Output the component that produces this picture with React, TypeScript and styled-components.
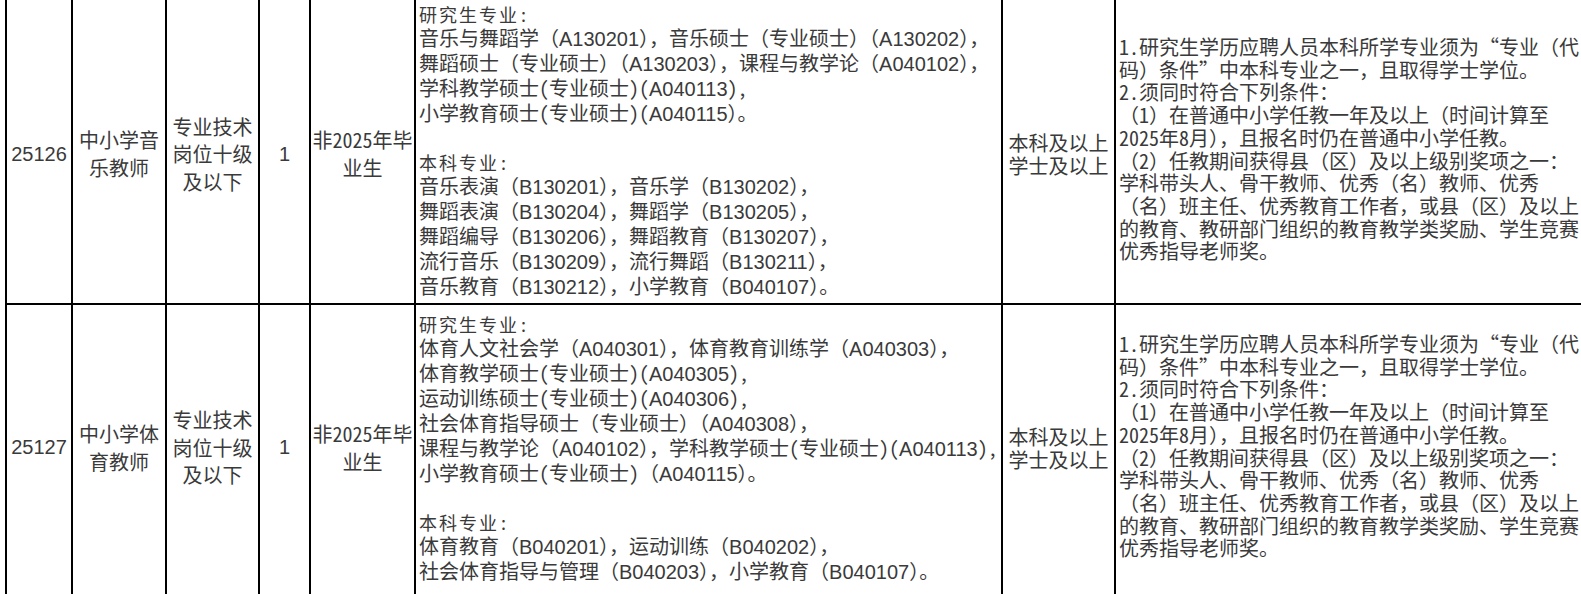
import styled, { createGlobalStyle } from 'styled-components';

const GlobalStyle = createGlobalStyle`
  html, body {
    margin: 0;
    padding: 0;
    background: #fff;
    overflow: hidden;
  }
`;

const cjk = '"Noto Sans Mono CJK SC", "Noto Sans CJK SC", sans-serif';
const latin = '"Liberation Sans", "Noto Sans CJK SC", sans-serif';

const Sheet = styled.div`
  width: 1581px;
  height: 594px;
  overflow: hidden;
  padding-left: 5px;
  box-sizing: border-box;
  font-family: ${cjk};
  font-size: 20px;
  color: #3a3a3a;
`;

const Row = styled.div<{ $height: number; $open?: boolean }>`
  display: grid;
  grid-template-columns: 66px 94px 93px 51px 105px 587px 113px 520px;
  width: max-content;
  height: ${({ $height }) => $height}px;
  box-sizing: border-box;
  border-bottom: ${({ $open }) => ($open ? 'none' : '2px solid #000')};
`;

const Cell = styled.div<{
  $left?: boolean;
  $latin?: boolean;
  $lh?: number;
  $pt?: number;
  $pb?: number;
  $pl?: number;
}>`
  box-sizing: border-box;
  border-left: 2px solid #000;
  display: flex;
  flex-direction: column;
  justify-content: center;
  align-items: ${({ $left }) => ($left ? 'flex-start' : 'center')};
  text-align: ${({ $left }) => ($left ? 'left' : 'center')};
  font-family: ${({ $latin }) => ($latin ? latin : cjk)};
  line-height: ${({ $lh }) => $lh ?? 27}px;
  padding: ${({ $pt }) => $pt ?? 0}px 0 ${({ $pb }) => $pb ?? 0}px ${({ $pl }) => $pl ?? 0}px;
  white-space: nowrap;
  overflow: hidden;
`;

const Line = styled.div`
  display: block;
`;

const Code = styled.span`
  font-family: ${latin};
`;

const Heading = styled.div`
  font-size: 18px;
  letter-spacing: 2px;
`;

const Blank = styled.div`
  height: 24px;
`;

// major codes like A130201 sit in a Latin face, the rest stays CJK
const MajorLine = ({ text }: { text: string }) => (
  <Line>
    {text.split(/([AB]\d{6})/).map((part, i) =>
      i % 2 ? <Code key={i}>{part}</Code> : part
    )}
  </Line>
);

interface Post {
  code: string;
  title: string[];
  level: string[];
  count: string;
  who: string[];
  grad: string[];
  undergrad: string[];
  degree: string[];
  terms: string[];
}

const terms = [
  '1.研究生学历应聘人员本科所学专业须为“专业（代',
  '码）条件”中本科专业之一，且取得学士学位。',
  '2.须同时符合下列条件：',
  '（1）在普通中小学任教一年及以上（时间计算至',
  '2025年8月），且报名时仍在普通中小学任教。',
  '（2）任教期间获得县（区）及以上级别奖项之一：',
  '学科带头人、骨干教师、优秀（名）教师、优秀',
  '（名）班主任、优秀教育工作者，或县（区）及以上',
  '的教育、教研部门组织的教育教学类奖励、学生竞赛',
  '优秀指导老师奖。',
];

const posts: Post[] = [
  {
    code: '25126',
    title: ['中小学音', '乐教师'],
    level: ['专业技术', '岗位十级', '及以下'],
    count: '1',
    who: ['非2025年毕', '业生'],
    grad: [
      '音乐与舞蹈学（A130201），音乐硕士（专业硕士）（A130202），',
      '舞蹈硕士（专业硕士）（A130203），课程与教学论（A040102），',
      '学科教学硕士(专业硕士)(A040113),',
      '小学教育硕士(专业硕士)(A040115）。',
    ],
    undergrad: [
      '音乐表演（B130201），音乐学（B130202），',
      '舞蹈表演（B130204），舞蹈学（B130205），',
      '舞蹈编导（B130206），舞蹈教育（B130207），',
      '流行音乐（B130209），流行舞蹈（B130211），',
      '音乐教育（B130212），小学教育（B040107）。',
    ],
    degree: ['本科及以上', '学士及以上'],
    terms,
  },
  {
    code: '25127',
    title: ['中小学体', '育教师'],
    level: ['专业技术', '岗位十级', '及以下'],
    count: '1',
    who: ['非2025年毕', '业生'],
    grad: [
      '体育人文社会学（A040301），体育教育训练学（A040303），',
      '体育教学硕士(专业硕士)(A040305),',
      '运动训练硕士(专业硕士)(A040306),',
      '社会体育指导硕士（专业硕士）（A040308），',
      '课程与教学论（A040102），学科教学硕士(专业硕士)(A040113),',
      '小学教育硕士(专业硕士)（A040115）。',
    ],
    undergrad: [
      '体育教育（B040201），运动训练（B040202），',
      '社会体育指导与管理（B040203），小学教育（B040107）。',
    ],
    degree: ['本科及以上', '学士及以上'],
    terms,
  },
];

const rowSizes = [
  { height: 305, pt: 5, pb: 0, majorPb: 2, termsPb: 4, open: false },
  { height: 300, pt: 0, pb: 15, majorPb: 14, termsPb: 17, open: true },
];

export default function App() {
  return (
    <>
      <GlobalStyle />
      <Sheet>
        {posts.map((p, i) => {
          const s = rowSizes[i];
          return (
            <Row key={p.code} $height={s.height} $open={s.open}>
              <Cell $latin $pt={s.pt} $pb={s.pb}>{p.code}</Cell>
              <Cell $pt={s.pt} $pb={s.pb} $lh={28}>
                {p.title.map((t) => <Line key={t}>{t}</Line>)}
              </Cell>
              <Cell $pt={s.pt} $pb={s.pb} $lh={27.5}>
                {p.level.map((t) => <Line key={t}>{t}</Line>)}
              </Cell>
              <Cell $latin $pt={s.pt} $pb={s.pb}>{p.count}</Cell>
              <Cell $pt={s.pt} $pb={s.pb} $lh={28}>
                {p.who.map((t) => <Line key={t}>{t}</Line>)}
              </Cell>
              <Cell $left $lh={24} $pl={3} $pb={s.majorPb}>
                <Heading>研究生专业:</Heading>
                {p.grad.map((t) => <MajorLine key={t} text={t} />)}
                <Blank />
                <Heading>本科专业:</Heading>
                {p.undergrad.map((t) => <MajorLine key={t} text={t} />)}
              </Cell>
              <Cell $pt={s.pt} $pb={s.pb} $lh={23}>
                {p.degree.map((t) => <Line key={t}>{t}</Line>)}
              </Cell>
              <Cell $left $lh={22.7} $pl={3} $pb={s.termsPb}>
                {p.terms.map((t) => <Line key={t}>{t}</Line>)}
              </Cell>
            </Row>
          );
        })}
      </Sheet>
    </>
  );
}
